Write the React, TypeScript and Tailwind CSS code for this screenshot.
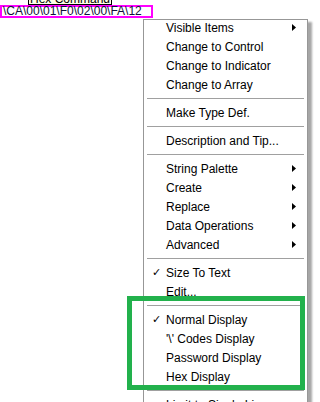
import React from 'react'

type Item =
  | { kind: 'item'; label: string; sub?: boolean; checked?: boolean }
  | { kind: 'sep' }

const ITEMS: Item[] = [
  { kind: 'item', label: 'Visible Items', sub: true },
  { kind: 'item', label: 'Change to Control' },
  { kind: 'item', label: 'Change to Indicator' },
  { kind: 'item', label: 'Change to Array' },
  { kind: 'sep' },
  { kind: 'item', label: 'Make Type Def.' },
  { kind: 'sep' },
  { kind: 'item', label: 'Description and Tip...' },
  { kind: 'sep' },
  { kind: 'item', label: 'String Palette', sub: true },
  { kind: 'item', label: 'Create', sub: true },
  { kind: 'item', label: 'Replace', sub: true },
  { kind: 'item', label: 'Data Operations', sub: true },
  { kind: 'item', label: 'Advanced', sub: true },
  { kind: 'sep' },
  { kind: 'item', label: 'Size To Text', checked: true },
  { kind: 'item', label: 'Edit...' },
  { kind: 'sep' },
  { kind: 'item', label: 'Normal Display', checked: true },
  { kind: 'item', label: "'\\' Codes Display" },
  { kind: 'item', label: 'Password Display' },
  { kind: 'item', label: 'Hex Display' },
  { kind: 'sep' },
  { kind: 'item', label: 'Limit to Single Line' },
]

function MenuRow({ item }: { item: Item }) {
  if (item.kind === 'sep') {
    return (
      <div className="h-[9px] flex items-center px-[3px]">
        <div className="h-px w-full bg-[#a0a0a0]" />
      </div>
    )
  }
  return (
    <div className="h-[19px] flex items-center gap-[7px] pl-[8px] pr-[11px]">
      <span className="w-[7px] text-[11px] leading-none">{item.checked ? '✓' : ''}</span>
      <span className="flex-1 whitespace-nowrap">{item.label}</span>
      {item.sub && (
        <svg width="4" height="7" viewBox="0 0 4 7" className="shrink-0">
          <path d="M0 0 L4 3.5 L0 7 Z" fill="#000" />
        </svg>
      )}
    </div>
  )
}

export default function App() {
  return (
    <div
      className="relative w-[320px] h-[402px] overflow-hidden bg-white text-black"
      style={{ fontFamily: '"Liberation Sans", Arial, sans-serif' }}
    >
      {/* string control with its label */}
      <div className="flex flex-col items-start">
        <div className="ml-[28px] mt-[-11px] w-[84px] h-[16px] border border-black bg-[#ffffe8] text-[12px] leading-[12px] pt-[3px] text-center whitespace-nowrap">
          Hex Command
        </div>
        <div className="w-[153px] h-[13px] border-2 border-[#ff00ff] bg-white overflow-x-clip overflow-y-visible">
          <div className="text-[12px] leading-[9px] pl-px whitespace-nowrap text-[#10103a]">
            \CA\00\01\F0\02\00\FA\12
          </div>
        </div>
      </div>

      {/* shortcut menu */}
      <div className="absolute left-[143px] top-[19px] w-[165px] h-[400px] border border-[#979797] bg-white text-[12px] shadow-[4px_3px_2px_rgba(0,0,0,0.35)]">
        <div className="mt-[-2px]">
          {ITEMS.map((item, i) => (
            <MenuRow key={i} item={item} />
          ))}
        </div>
      </div>

      {/* highlight */}
      <div className="absolute left-[127px] top-[296px] w-[178px] h-[94px] border-[5px] border-[#22b14c]" />
    </div>
  )
}
